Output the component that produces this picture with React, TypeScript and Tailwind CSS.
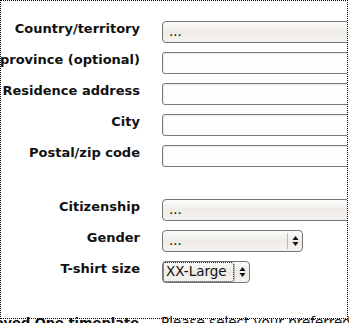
import React from "react";

const Arrows = () => (
  <svg width="7" height="12" viewBox="0 0 7 12" className="block">
    <path d="M3.5 1 L6.5 5 L0.5 5 Z" fill="#111" />
    <path d="M3.5 11 L6.5 7 L0.5 7 Z" fill="#111" />
  </svg>
);

const Select = ({
  value,
  width,
  focus,
}: {
  value: string;
  width: string;
  focus?: boolean;
}) => (
  <div
    className={`${width} h-[22px] shrink-0 flex items-stretch rounded-[4px] border border-[#777573] bg-linear-to-b from-[#fdfcfb] via-[#eeebe7] to-[#f5f3f0] text-[13.5px] leading-none text-[#111]`}
    style={{ fontFamily: '"DejaVu Sans", sans-serif' }}
  >
    <div className="flex-1 flex items-center pl-[1px] pr-[1px] py-[1px] min-w-0">
      {focus ? (
        <span className="flex-1 h-full flex items-center pl-[2px] outline outline-1 outline-dotted outline-[#222] rounded-[1px]">
          {value}
        </span>
      ) : (
        <span className="pl-[5px] pb-[1px]">{value}</span>
      )}
    </div>
    <div className="w-[15px] border-l border-[#bdbab6] my-[2px] flex items-center justify-center">
      <Arrows />
    </div>
  </div>
);

const Input = () => (
  <div className="w-[220px] h-[22px] shrink-0 rounded-[3px] border border-[#7a7874] bg-[#fffefd] shadow-[inset_1px_1px_1px_rgba(0,0,0,0.08)]" />
);

const Label = ({ children }: { children: React.ReactNode }) => (
  <div
    className="flex justify-end font-bold text-[13px] leading-[15px] text-[#111]"
    style={{ fontFamily: '"DejaVu Sans", sans-serif' }}
  >
    <span className="whitespace-nowrap shrink-0">{children}</span>
  </div>
);

export default function App() {
  return (
    <div className="w-[349px] h-[323px] overflow-hidden bg-white relative">
      <div className="w-[348px] border border-dotted border-black overflow-hidden pt-[20px] pb-[35px]">
        <div className="grid grid-cols-[139px_1fr] gap-x-[22px] gap-y-[9px] items-start">
          <Label>Country/territory</Label>
          <Select value="..." width="w-[220px]" />
          <Label>State/province (optional)</Label>
          <Input />
          <Label>Residence address</Label>
          <Input />
          <Label>City</Label>
          <Input />
          <Label>Postal/zip code</Label>
          <Input />
          <div className="col-span-2 h-[14px]" />
          <Label>Citizenship</Label>
          <Select value="..." width="w-[220px]" />
          <Label>Gender</Label>
          <Select value="..." width="w-[141px]" />
          <Label>T-shirt size</Label>
          <Select value="XX-Large" width="w-[88px]" focus />
        </div>
      </div>
      <div className="grid grid-cols-[139px_1fr] gap-x-[22px] -mt-[4px]">
        <Label>Employed One timeplate</Label>
        <div
          className="text-[13.5px] leading-[15px] text-[#111] whitespace-nowrap"
          style={{ fontFamily: '"DejaVu Sans", sans-serif' }}
        >
          Please select your preferred time
        </div>
      </div>
    </div>
  );
}
